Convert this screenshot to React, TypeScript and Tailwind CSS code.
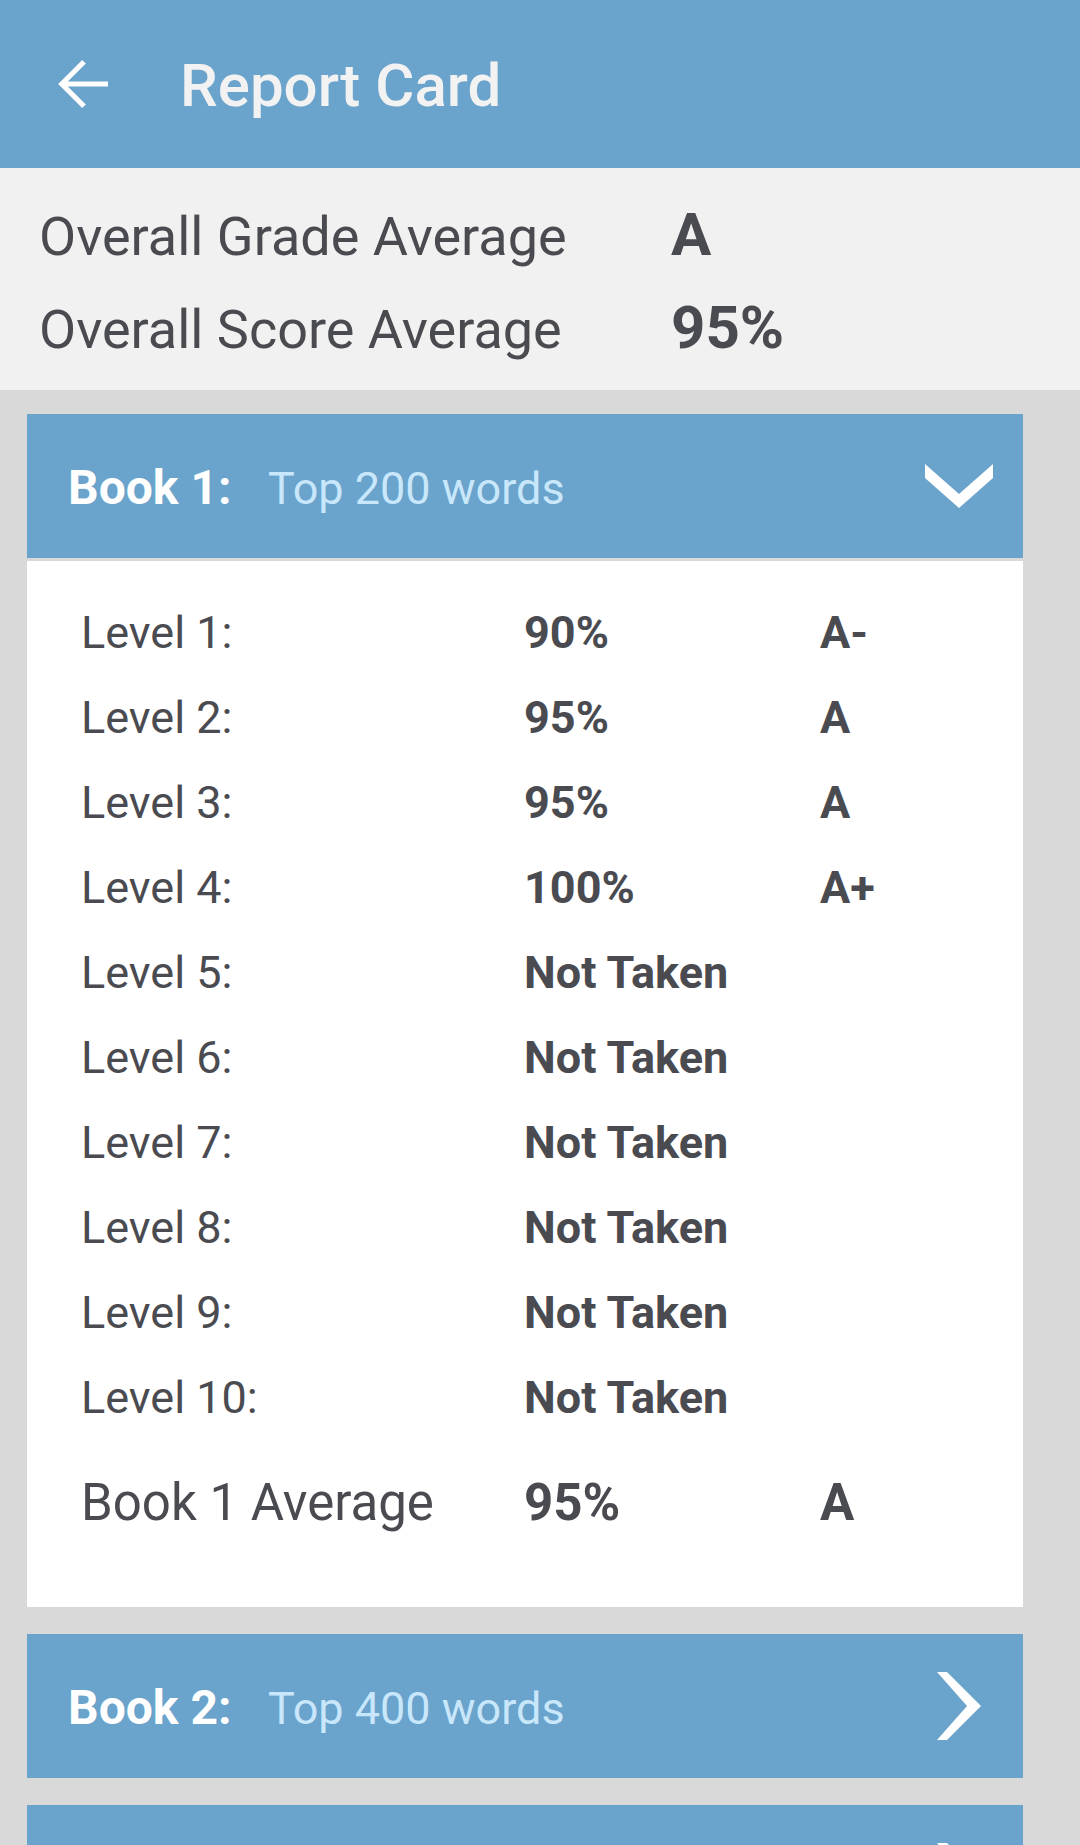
import React from "react";

const levels = [
  { name: "Level 1:", score: "90%", grade: "A-" },
  { name: "Level 2:", score: "95%", grade: "A" },
  { name: "Level 3:", score: "95%", grade: "A" },
  { name: "Level 4:", score: "100%", grade: "A+" },
  { name: "Level 5:", score: "Not Taken", grade: "" },
  { name: "Level 6:", score: "Not Taken", grade: "" },
  { name: "Level 7:", score: "Not Taken", grade: "" },
  { name: "Level 8:", score: "Not Taken", grade: "" },
  { name: "Level 9:", score: "Not Taken", grade: "" },
  { name: "Level 10:", score: "Not Taken", grade: "" },
];

const ArrowBack = () => (
  <svg width="72" height="72" viewBox="0 0 24 24" fill="none">
    <path d="M4.6 12H20M12 4.6L4.6 12l7.4 7.4" stroke="#fff" strokeWidth="1.7" />
  </svg>
);

const ChevronDown = () => (
  <svg width="68" height="44" viewBox="0 0 68 44">
    <polygon points="0,0 0,14 34,44 68,14 68,0 34,30" fill="#fff" />
  </svg>
);

const ChevronRight = () => (
  <svg width="44" height="68" viewBox="0 0 44 68">
    <polygon points="0,0 10,0 44,34 10,68 0,68 30,34" fill="#fff" />
  </svg>
);

const BookHeader = ({ label, subtitle, open }: { label: string; subtitle: string; open?: boolean }) => (
  <div className="flex h-[144px] items-center bg-[#6aa3cb] pl-[41px] pr-[30px]">
    <div className="mt-[4px] flex items-baseline leading-none">
      <span className="w-[200px] text-[48px] font-bold text-white">{label}</span>
      <span className="text-[45px] text-[#c9e7fb]">{subtitle}</span>
    </div>
    <span className="ml-auto flex w-[68px] justify-center">
      {open ? <ChevronDown /> : <ChevronRight />}
    </span>
  </div>
);

export default function App() {
  return (
    <div className="min-h-screen bg-[#d9d9d9] font-['Roboto',sans-serif] text-[#4a4b50]">
      <div className="flex h-[168px] items-center bg-[#6aa3cb] pl-[48px]">
        <ArrowBack />
        <h1 className="ml-[60px] mt-[3px] text-[60px] font-medium leading-none text-[#f2f2f2]">
          Report Card
        </h1>
      </div>

      <div className="h-[222px] bg-[#f1f1f1] pl-[39px] pt-[21px]">
        <div className="flex items-baseline leading-[91px]">
          <span className="w-[632px] text-[54px]">Overall Grade Average</span>
          <span className="text-[60px] font-bold">A</span>
        </div>
        <div className="flex items-baseline leading-[91px]">
          <span className="w-[632px] text-[54px]">Overall Score Average</span>
          <span className="text-[60px] font-bold">95%</span>
        </div>
      </div>

      <div className="flex flex-col gap-[27px] pt-[24px] pl-[27px]">
        <div className="w-[996px]">
          <BookHeader label="Book 1:" subtitle="Top 200 words" open />
          <div className="mt-[3px] bg-white pb-[62px] pl-[54px] pt-[29px]">
            {levels.map((l) => (
              <div key={l.name} className="flex text-[45px] leading-[85px]">
                <span className="w-[443px]">{l.name}</span>
                <span className="w-[296px] font-bold">{l.score}</span>
                <span className="font-bold">{l.grade}</span>
              </div>
            ))}
            <div className="mt-[20px] flex text-[51px] leading-[85px]">
              <span className="w-[443px]">Book 1 Average</span>
              <span className="w-[296px] font-bold">95%</span>
              <span className="font-bold">A</span>
            </div>
          </div>
        </div>
        <div className="w-[996px]">
          <BookHeader label="Book 2:" subtitle="Top 400 words" />
        </div>
        <div className="w-[996px]">
          <BookHeader label="Book 3:" subtitle="Top 600 words" />
        </div>
      </div>
    </div>
  );
}
